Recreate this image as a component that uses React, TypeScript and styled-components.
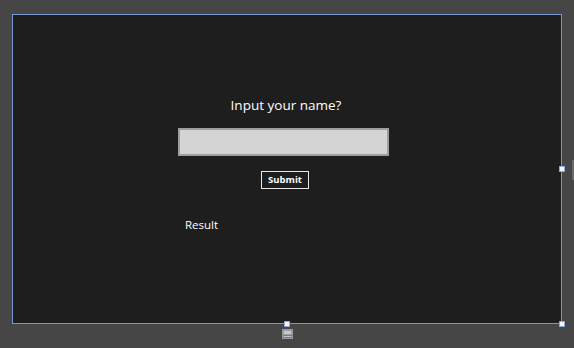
import React from "react";
import styled, { createGlobalStyle } from "styled-components";

const GlobalStyle = createGlobalStyle`
  html, body {
    margin: 0;
    padding: 0;
    background: #464646;
    width: 574px;
    height: 348px;
    overflow: hidden;
  }
`;

const Stage = styled.div`
  width: 574px;
  height: 348px;
  box-sizing: border-box;
  padding: 14px 0 0 12px;
  display: flex;
  flex-direction: column;
  align-items: flex-start;
`;

const Surface = styled.div`
  position: relative;
  width: 550px;
  height: 310px;
  box-sizing: border-box;
  border: 1px solid #7896d2;
  background: #1e1e1e;
  display: flex;
  flex-direction: column;
  align-items: center;
  padding-top: 80px;
  font-family: "Open Sans", "Noto Sans", sans-serif;
  color: #ffffff;
`;

const Prompt = styled.div`
  font-size: 13.5px;
  line-height: 20px;
  margin-left: -2px;
`;

const NameBox = styled.input`
  margin-top: 13px;
  margin-left: -8px;
  width: 211px;
  height: 28px;
  box-sizing: border-box;
  border: 2px solid #9e9e9e;
  background: #d4d4d4;
  outline: none;
  padding: 0;
`;

const SubmitButton = styled.button`
  margin-top: 15px;
  margin-left: -4px;
  width: 48px;
  height: 18px;
  box-sizing: border-box;
  border: 1px solid #e8e8e8;
  background: #1e1e1e;
  color: #ffffff;
  font-family: "Open Sans", "Noto Sans", sans-serif;
  font-weight: 700;
  font-size: 9.5px;
  line-height: 14px;
  padding: 0;
`;

const ResultRow = styled.div`
  align-self: stretch;
  margin-top: 28px;
  padding-left: 172px;
  font-size: 11.5px;
  line-height: 16px;
`;

const Handle = styled.div<{ $x: number; $y: number }>`
  position: absolute;
  left: ${(p) => p.$x}px;
  top: ${(p) => p.$y}px;
  width: 6px;
  height: 6px;
  box-sizing: border-box;
  background: #f4f6ff;
  border: 1px solid #8fa6dd;
`;

const Footer = styled.div`
  width: 550px;
  display: flex;
  justify-content: center;
  padding-top: 5px;
`;

const SideStrip = styled.div`
  position: absolute;
  right: 0;
  top: 160px;
  width: 2px;
  height: 20px;
  background: #6a6a6a;
`;

function LayoutIcon() {
  return (
    <svg width="11" height="10" viewBox="0 0 11 10">
      <rect x="0.5" y="0.5" width="10" height="9" fill="#7a7a7a" stroke="#9a9a9a" />
      <rect x="1.5" y="1.5" width="8" height="4" fill="#c8c8c8" />
      <line x1="1.5" y1="7.5" x2="9.5" y2="7.5" stroke="#b8c4e0" />
    </svg>
  );
}

export default function App() {
  return (
    <>
      <GlobalStyle />
      <Stage>
        <Surface>
          <Prompt>Input your name?</Prompt>
          <NameBox type="text" />
          <SubmitButton>Submit</SubmitButton>
          <ResultRow>Result</ResultRow>
          <Handle $x={546} $y={151} />
          <Handle $x={271} $y={306} />
          <Handle $x={546} $y={306} />
        </Surface>
        <Footer>
          <LayoutIcon />
        </Footer>
        <SideStrip />
      </Stage>
    </>
  );
}
